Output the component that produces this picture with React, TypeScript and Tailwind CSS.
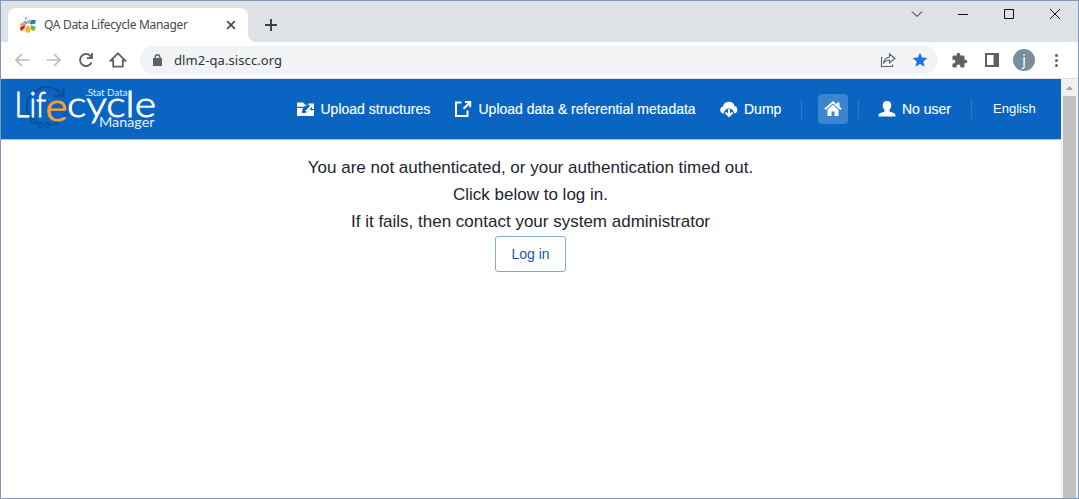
import type { ReactNode } from "react";

function Favicon() {
  return (
    <svg className="h-4 w-4 shrink-0" viewBox="0 0 16 16">
      <path d="M3.500 4h4.500l-.6 3.200L3 6.500Z" fill="#6fb8d8" />
      <circle cx="6" cy="1.600" r="1.300" fill="#7cc3de" />
      <path d="M8.600 2.500 10.500 3 9 7H8Z" fill="#ef7d4a" />
      <path d="M10 5.200 11.500 3h4v3.500L10.500 7.500Z" fill="#1d78c0" />
      <path d="M.5 6.500 2.500 6l3.800 1.700L4 8.800.3 8.500Z" fill="#f08a3c" />
      <path d="M.3 9.700 5.500 8.300 4.500 11l-2.500 2.800-1.800-.5Z" fill="#c8232c" />
      <path d="M8 8.200 10.800 11l-.8 4-2 1-2-1-.8-4Z" fill="#f9b415" />
      <path d="M10.300 8.300 15.500 9.500v2.300L14 14l-2.700-1Z" fill="#72b844" />
    </svg>
  );
}

function Logo() {
  return (
    <svg className="h-[60px] w-[160px] shrink-0" viewBox="0 0 160 60">
      <g fill="none" stroke="#084f96">
        <path d="M31 41A19 19 0 0 1 27 21Q34 8 46 8 56 9 61 16" strokeWidth="2" />
        <path d="M62.500 8.500V17H53" strokeWidth="2.400" />
        <path d="M65 22A19.500 19.500 0 0 1 60 41" strokeWidth="1.500" />
        <circle cx="32.500" cy="42" r="2.200" strokeWidth="1.300" />
        <circle cx="39" cy="45.500" r="2.200" strokeWidth="1.300" />
        <circle cx="46" cy="46" r="2.200" strokeWidth="1.300" />
        <path d="M49 46Q56 45 60 41" strokeWidth="1.500" />
      </g>
      <g fontFamily="Lato, sans-serif" fontWeight="300" stroke="#fff" strokeWidth=".8" fill="#fff">
        <text x="13.500" y="37.500" fontSize="36" textLength="31.500" lengthAdjust="spacingAndGlyphs">Lif</text>
        <text x="44.500" y="41.500" fontSize="40" textLength="22" lengthAdjust="spacingAndGlyphs" fill="#f7a12e" stroke="#f7a12e" strokeWidth="1.200">e</text>
        <text x="66" y="37.500" fontSize="36" textLength="89" lengthAdjust="spacingAndGlyphs">cycle</text>
      </g>
      <g fontFamily="Lato, sans-serif" fill="#e6f0fa">
        <text x="84.500" y="16.500" fontSize="9" textLength="42" lengthAdjust="spacingAndGlyphs">.Stat Data</text>
        <text x="98" y="47.500" fontSize="13" textLength="55.500" lengthAdjust="spacingAndGlyphs">Manager</text>
      </g>
    </svg>
  );
}

function Glyph({ children, className }: { children: ReactNode; className: string }) {
  return (
    <svg className={`shrink-0 ${className}`} viewBox="0 0 18 18" fill="none" stroke="currentColor">
      {children}
    </svg>
  );
}

function TabStrip() {
  return (
    <div className="flex h-[41px] shrink-0 bg-[#dee1e6] pl-[7px] pt-[7px]">
      <div className="flex h-[34px] w-[240px] items-center rounded-t-lg bg-white pl-3 pr-2">
        <Favicon />
        <span className="ml-2 w-[174px] whitespace-nowrap font-['Noto_Sans',sans-serif] text-[12px] tracking-[-0.31px] text-[#45494d]">QA Data Lifecycle Manager</span>
        <Glyph className="ml-[7px] h-[18px] w-[18px] text-[#45494d]">
          <path d="m5.200 5.200 7.600 7.600m0-7.600-7.600 7.600" strokeWidth="1.7" />
        </Glyph>
      </div>
      <div className="h-[34px] w-2 bg-white"><div className="h-full rounded-bl-lg bg-[#dee1e6]" /></div>
      <Glyph className="ml-[6px] mt-2 h-[18px] w-[18px] text-[#3c4043]">
        <path d="M9 3v12M3 9h12" strokeWidth="1.9" />
      </Glyph>
      <div className="ml-auto flex h-3 items-center text-[#111]">
        <svg className="mr-[34px] h-3 w-3" viewBox="0 0 12 12" fill="none" stroke="currentColor"><path d="m1 3.500 5 5 5-5" /></svg>
        <svg className="mr-[34px] h-3 w-3" viewBox="0 0 12 12" fill="none" stroke="currentColor"><path d="M1 6.500h10" /></svg>
        <svg className="mr-[34px] h-3 w-3" viewBox="0 0 12 12" fill="none" stroke="currentColor"><path d="M1.500 1.500h9v9h-9Z" /></svg>
        <svg className="mr-[17px] h-3 w-3" viewBox="0 0 12 12" fill="none" stroke="currentColor"><path d="m1 1 10 10M11 1 1 11" /></svg>
      </div>
    </div>
  );
}

function Toolbar() {
  return (
    <div className="flex h-[37px] shrink-0 items-center border-b border-[#dcdfe3] bg-white pl-3 text-[#5f6368]">
      <Glyph className="h-[18px] w-[18px] text-[#babcbe]"><path d="M16 9H3m6-6L3 9l6 6" strokeWidth="1.7" /></Glyph>
      <Glyph className="ml-[14px] h-[18px] w-[18px] text-[#babcbe]"><path d="M2 9h13M9 3l6 6-6 6" strokeWidth="1.7" /></Glyph>
      <Glyph className="ml-[14px] h-[18px] w-[18px]"><path d="M14.500 11.500A6 6 0 1 1 13.300 4.800L15 6.500M15 2v5h-5" strokeWidth="1.9" /></Glyph>
      <Glyph className="ml-[14px] h-[18px] w-[18px]"><path d="M1.800 9.500 9 2.300l7.200 7.200h-2.400v6.200H4.200V9.500Z" strokeWidth="1.8" /></Glyph>
      <div className="ml-[13px] flex h-7 w-[798px] items-center rounded-full bg-[#f1f3f4] pl-[13px] pr-[9px]">
        <svg className="h-3 w-[9px]" viewBox="0 0 9 12"><path d="M1.500 4V3a3 3 0 0 1 6 0v1H9v8H0V4Zm1.400 0h3.200V3a1.600 1.600 0 0 0-3.200 0Z" fill="currentColor" /></svg>
        <span className="ml-[12px] pt-px font-['Noto_Sans',sans-serif] text-[13px] tracking-[0.08px] text-[#303438]">dlm2-qa.siscc.org</span>
        <Glyph className="ml-auto h-[18px] w-[18px]">
          <path d="M3.500 6.500h-1v9h11v-2M10.500 6V3L16 7.500l-5.500 4.300V9C8 9 6 10 4.500 12.500 5 9 7 6.500 10.500 6Z" strokeWidth="1.100" />
        </Glyph>
        <Glyph className="ml-[14px] h-[18px] w-[18px] text-[#1a73e8]"><path d="m9 1.500 2 5.100 5.500.4-4.200 3.500 1.300 5.300L9 12.900l-4.600 2.900 1.300-5.300L1.500 7l5.500-.4Z" fill="currentColor" stroke="none" /></Glyph>
      </div>
      <svg className="ml-[13px] h-[17px] w-[17px]" viewBox="0 0 24 24" fill="currentColor"><path d="M20.500 11H19V7c0-1.100-.9-2-2-2h-4V3.500a2.500 2.500 0 0 0-5 0V5H4c-1.100 0-1.990.9-1.990 2v3.800H3.500c1.490 0 2.700 1.210 2.700 2.700S4.990 16.200 3.500 16.200H2V20c0 1.100.9 2 2 2h3.800v-1.500c0-1.490 1.210-2.700 2.700-2.700s2.700 1.210 2.700 2.700V22H17c1.100 0 2-.9 2-2v-4h1.500a2.500 2.500 0 0 0 0-5Z" /></svg>
      <Glyph className="ml-[15px] h-[18px] w-[18px]"><path d="M3 3h12v12H3Z" strokeWidth="2" /><path d="M11 3h4v12h-4Z" fill="currentColor" strokeWidth="1" /></Glyph>
      <div className="ml-[12px] flex h-[22px] w-[22px] items-center justify-center rounded-full bg-[#78909c] pb-px font-['Noto_Sans',sans-serif] text-[14px] leading-none text-white">j</div>
      <Glyph className="ml-[12px] h-[18px] w-[18px]"><g fill="currentColor" stroke="none"><circle cx="9.500" cy="4.500" r="1.500" /><circle cx="9.500" cy="9.500" r="1.500" /><circle cx="9.500" cy="14.500" r="1.500" /></g></Glyph>
    </div>
  );
}

function Header() {
  return (
    <header className="flex h-[61px] items-center border-b border-[#9fc4e8] bg-[#0965c1] font-['Liberation_Sans',Arial,sans-serif] text-[14px] text-white">
      <Logo />
      <Glyph className="ml-[136px] h-[18px] w-[18px]">
        <path d="M0 2.500h6l2 2.200h2.500l-2 2H0ZM0 8h8.500l-2 4.200 3.200.3L13 9l1.500 1.500H17V16H0Z" fill="currentColor" stroke="none" />
        <path d="M6.500 13c0-4 2.500-6.500 7-6.500" stroke="#0965c1" strokeWidth="3.500" />
        <path d="M11.500 4.500H16v4.500M15.500 5 9 11.500" strokeWidth="1.900" />
        <path d="M16 10v5" strokeWidth="2" />
      </Glyph>
      <span className="ml-[5.500px] w-[109.500px] whitespace-nowrap pt-px [-webkit-text-stroke:0.15px]">Upload structures</span>
      <Glyph className="ml-[24px] h-[18px] w-[18px]">
        <path d="M7.500 2.500H2V16h11.500v-5.500" strokeWidth="2" />
        <path d="M11 2h5.200v5.200" strokeWidth="2" /><path d="M15.500 3 9.500 8.700" strokeWidth="2.200" />
      </Glyph>
      <span className="ml-[6.500px] w-[217.500px] whitespace-nowrap pt-px [-webkit-text-stroke:0.15px]">Upload data &amp; referential metadata</span>
      <Glyph className="ml-[24px] h-[18px] w-[18px]">
        <path d="M4 13.500H3.500A3.500 3.500 0 0 1 3 6.600 6 6 0 0 1 14.600 6 3.900 3.900 0 0 1 14.500 13.500H14L9 8.500Z" fill="currentColor" stroke="none" />
        <path d="M4 13.500a5 5 0 0 1 10 0l-2 2H6Z" fill="#0965c1" stroke="none" />
        <path d="M9 9v6M5.500 12.500 9 16l3.500-3.500" strokeWidth="2" />
      </Glyph>
      <span className="ml-[6px] w-[39px] whitespace-nowrap pt-px [-webkit-text-stroke:0.15px]">Dump</span>
      <span className="ml-[18px] h-5 w-px bg-[#287acb]" />
      <div className="ml-[16px] flex h-[30px] w-[30px] items-center justify-center rounded bg-[#3c84cd]">
        <Glyph className="h-[18px] w-[18px]">
          <path d="m1 9.200 8-7 8 7" strokeWidth="1.800" /><path d="M13 2.500h2.500v5L13 5.500ZM3.500 9.500 9 4.800l5.500 4.700V16h-4v-4.500h-3V16h-4Z" fill="currentColor" stroke="none" />
        </Glyph>
      </div>
      <span className="ml-[10px] h-5 w-px bg-[#287acb]" />
      <Glyph className="ml-[19px] h-[18px] w-[18px]">
        <path d="M9 1c3 0 4.400 2 4.300 4.500-.1 2-1 3.500-1.800 4.300v1.700l4.600 1.700c1 .4 1.400 1.500 1.400 3.300H.5c0-1.800.4-2.900 1.400-3.300l4.600-1.700V9.800c-.8-.8-1.700-2.300-1.800-4.300C4.600 3 6 1 9 1Z" fill="currentColor" stroke="none" />
      </Glyph>
      <span className="ml-[6px] w-[50px] whitespace-nowrap pt-px [-webkit-text-stroke:0.15px]">No user</span>
      <span className="ml-[19px] h-5 w-px bg-[#287acb]" />
      <span className="ml-[21px] text-[13px]">English</span>
    </header>
  );
}

export default function App() {
  return (
    <div className="flex h-[499px] w-[1079px] flex-col overflow-hidden border border-[#8298b9] bg-white">
      <TabStrip />
      <Toolbar />
      <div className="flex min-h-0 flex-1">
        <div className="w-[1060px]">
          <Header />
          <main className="flex flex-col items-center pr-[1px] pt-[14px] font-['Liberation_Sans',Arial,sans-serif] text-[17px] leading-[27px] text-[#1c2530]">
            <p>You are not authenticated, or your authentication timed out.</p>
            <p>Click below to log in.</p>
            <p>If it fails, then contact your system administrator</p>
            <button className="mr-px mt-px h-9 w-[71px] rounded-[3px] border border-[#83a8db] pl-px pt-px text-[14px] text-[#1659a8]">Log in</button>
          </main>
        </div>
        <div className="flex w-[17px] flex-col items-center bg-[#f1f1f1]">
          <svg className="h-[17px] w-[17px]" viewBox="0 0 17 17"><path d="m5 11 3.500-4 3.500 4Z" fill="#a3a3a3" /></svg>
          <div className="w-[13px] flex-1 bg-[#c1c1c1]" />
        </div>
      </div>
    </div>
  );
}
